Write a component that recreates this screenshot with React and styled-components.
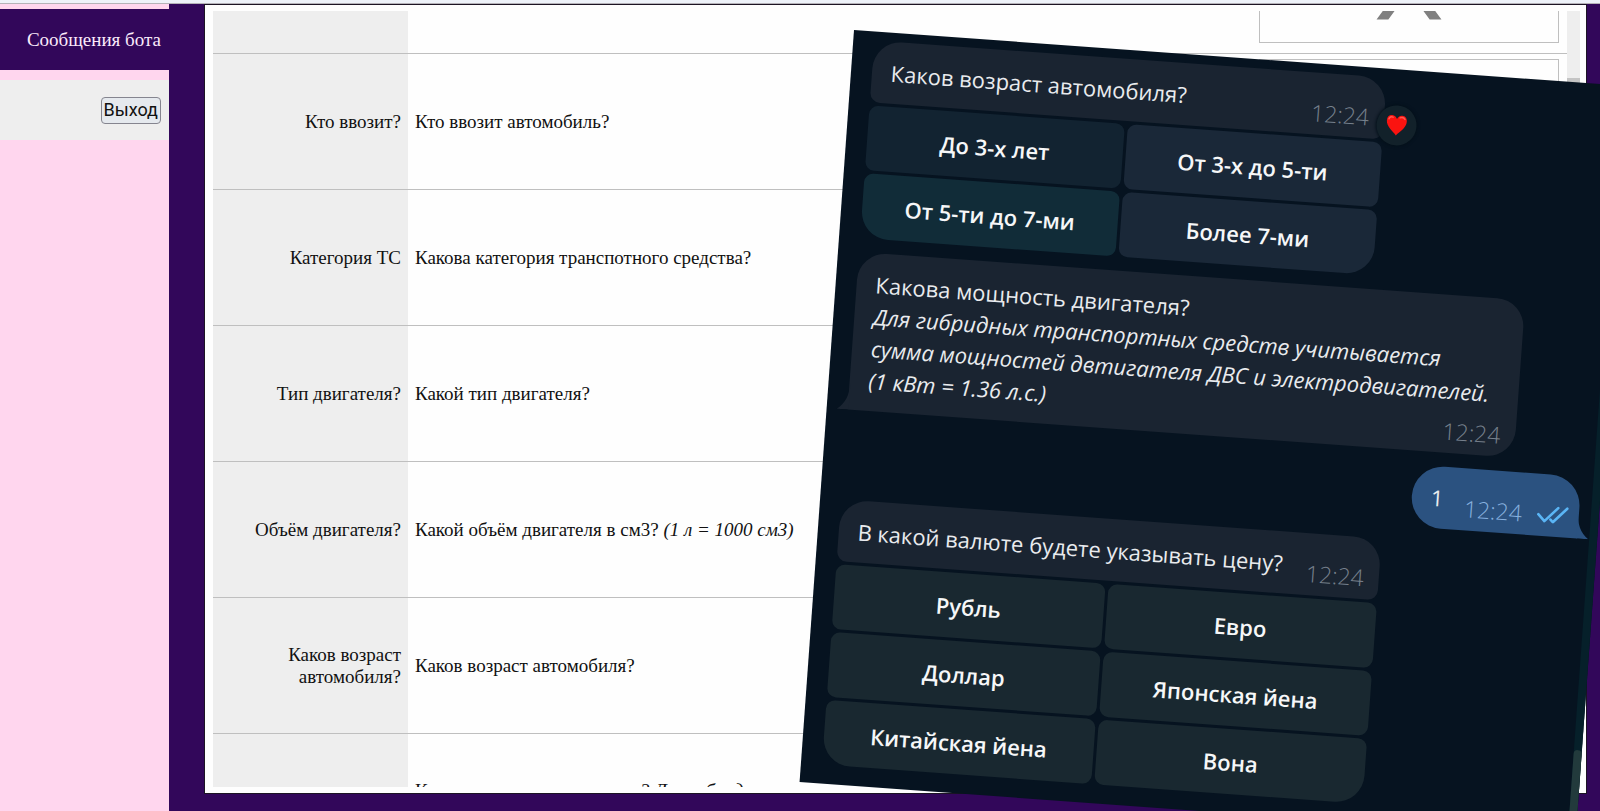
import React, { useLayoutEffect, useRef } from 'react'
import styled, { createGlobalStyle } from "styled-components";

const messages = [
  { id: 0, name: "", text: "" },
  { id: 1, name: "Кто ввозит?", text: "Кто ввозит автомобиль?" },
  { id: 2, name: "Категория ТС", text: "Какова категория транспотного средства?" },
  { id: 3, name: "Тип двигателя?", text: "Какой тип двигателя?" },
  { id: 4, name: "Объём двигателя?", text: "Какой объём двигателя в см3?", note: "(1 л = 1000 см3)" },
  { id: 5, name: "Каков возраст автомобиля?", text: "Каков возраст автомобиля?" },
  {
    id: 6,
    name: "",
    text: "Какова мощность двигателя?",
    note: "Для гибридных транспортных средств учитывается сумма мощностей двтигателя ДВС и электродвигателей. (1 кВт = 1.36 л.с.)"
  },
];

const ages = [
  { label: "До 3-х лет", color: "#122331" },
  { label: "От 3-х до 5-ти", color: "#1a2838" },
  { label: "От 5-ти до 7-ми", color: "#112c38" },
  { label: "Более 7-ми", color: "#1a2838" },
];

const currencies = ["Рубль", "Евро", "Доллар", "Японская йена", "Китайская йена", "Вона"];

function MessageTable() {
  const scroller = useRef(null);

  useLayoutEffect(() => {
    scroller.current.scrollTop = 93;
  }, [])

  return (
    <Scroller ref={scroller}>
      <Table>
        <tbody>
          {messages.map((message) => (
            <tr key={message.id}>
              <NameCell scope="row">{message.name}</NameCell>
              <TextCell>
                {message.text} {message.note && <i>{message.note}</i>}
              </TextCell>
              <ImageCell>
                <NoImage viewBox="0 0 300 120">
                  <path d="M117 97h12l54-73h-12z M183 97h-12l-54-73h12z" fill="#808080" />
                </NoImage>
              </ImageCell>
            </tr>
          ))}
        </tbody>
      </Table>
    </Scroller>
  )
}

function Chat() {
  return (
    <ChatWindow>
      <Feed>
        <Group $width="514px">
          <Bubble $keyboard>
            <Body>Каков возраст автомобиля?</Body>
            <Time>12:24</Time>
            <Reaction>
              <svg width="22" height="22" viewBox="0 0 22 22">
                <path d="M11 21C8 17 1 13 1 6.500C1 3 3 1 6 1C8.500 1 10 2.500 11 4.500C12 2.500 13.500 1 16 1C19 1 21 3 21 6.500C21 13 14 17 11 21Z" fill="#fb1310" />
                <path d="M3 5C3.500 3 5 2.300 7 3M14 3.200C16 2.300 18 2.800 19 4.500" stroke="#ff5a50" strokeWidth="1.500" fill="none" strokeLinecap="round" />
              </svg>
            </Reaction>
          </Bubble>
          <Keyboard>
            {ages.map((age) => (
              <KeyButton key={age.label} type="button" $color={age.color}>{age.label}</KeyButton>
            ))}
          </Keyboard>
        </Group>
        <Group $width="668px">
          <Bubble $tail="left">
            <Body>
              Какова мощность двигателя?<br />
              <i>
                Для гибридных транспортных средств учитывается<br />
                сумма мощностей двтигателя ДВС и электродвигателей.<br />
                (1 кВт = 1.36 л.с.)
              </i>
            </Body>
            <Time>12:24</Time>
            <Tail $side="left" viewBox="0 0 12 28">
              <path d="M12 0C12 14 8 22 0 28H12Z" fill="#1a2431" />
            </Tail>
          </Bubble>
        </Group>
        <Group $width="168px" $own>
          <Bubble $tail="right" $own>
            <Body>1</Body>
            <Time $own>
              12:24
              <svg width="32" height="18" viewBox="0 0 32 18">
                <path d="M1.500 9.500L8 16L21 2M14 14L16.500 16.500L30 2" stroke="#5ab5f5" strokeWidth="2.600" fill="none" strokeLinecap="round" strokeLinejoin="round" />
              </svg>
            </Time>
            <Tail $side="right" viewBox="0 0 12 28">
              <path d="M0 0C0 14 4 22 12 28H0Z" fill="#2b5280" />
            </Tail>
          </Bubble>
        </Group>
        <Group $width="542px">
          <Bubble $keyboard>
            <Body>В какой валюте будете указывать цену?</Body>
            <Time>12:24</Time>
          </Bubble>
          <Keyboard>
            {currencies.map((currency) => (
              <KeyButton key={currency} type="button">{currency}</KeyButton>
            ))}
          </Keyboard>
        </Group>
      </Feed>
      <ChatTrack>
        <ChatThumb />
      </ChatTrack>
    </ChatWindow>
  )
}

function App() {
  return (
    <Page>
      <GlobalStyle />
      <TopStrip />
      <Layout>
        <Sidebar>
          <NavLink href="#messages">Сообщения бота</NavLink>
          <Exit>
            <ExitButton type="button">Выход</ExitButton>
          </Exit>
        </Sidebar>
        <Main>
          <Panel>
            <MessageTable />
            <Track>
              <Thumb />
            </Track>
          </Panel>
        </Main>
      </Layout>
      <Chat />
    </Page>
  )
}

const GlobalStyle = createGlobalStyle`
* {
  box-sizing: border-box;
}
body {
  margin: 0;
  font-family: "Liberation Serif", serif;
  font-size: 19px;
  line-height: 22px;
  color: #111;
}
`
const Page = styled.div`
  position: relative;
  display: flex;
  flex-direction: column;
  height: 100vh;
  overflow: hidden;
`
const TopStrip = styled.div`
  height: 4px;
  background: #eef2f9;
  border-bottom: 1px solid #b5b2b8;
`
const Layout = styled.div`
  flex: 1;
  display: flex;
  min-height: 0;
`
const Sidebar = styled.nav`
  width: 169px;
  padding-top: 5px;
  background: #ffd6ee;
  display: flex;
  flex-direction: column;
  gap: 10px;
`
const NavLink = styled.a`
  height: 61px;
  padding: 0 8px;
  display: flex;
  align-items: center;
  justify-content: flex-end;
  background: #32075a;
  color: #fbeafa;
  text-decoration: none;
`
const Exit = styled.div`
  height: 60px;
  padding: 0 8px;
  display: flex;
  align-items: center;
  justify-content: flex-end;
  background: #eee;
`
const ExitButton = styled.button`
  height: 27px;
  padding: 0 2px;
  font-family: Roboto, sans-serif;
  font-size: 18px;
  line-height: 22px;
  color: #111;
  background: #e5e9ee;
  border: 1px solid #85858f;
  border-radius: 4px;
`
const Main = styled.main`
  flex: 1;
  min-width: 0;
  display: flex;
  padding: 0 13px 17px 35px;
  background: #32075a;
`
const Panel = styled.section`
  flex: 1;
  min-width: 0;
  display: flex;
  padding: 6px 6px 6px 8px;
  background: #fefefe;
  border: 1px solid #1c1424;
`
const Scroller = styled.div`
  flex: 1;
  min-width: 0;
  overflow: hidden;
`
const Table = styled.table`
  width: 100%;
  table-layout: fixed;
  border-collapse: separate;
  border-spacing: 0;

  tr {
    height: 136px;
  }
  th, td {
    border-bottom: 1px solid #bfbfbf;
  }
`
const NameCell = styled.th`
  width: 195px;
  padding: 0 7px;
  text-align: right;
  font-weight: normal;
  background: #eee;
`
const TextCell = styled.td`
  padding: 0 7px;
`
const ImageCell = styled.td`
  width: 316px;
  padding: 5px 8px 10px;
`
const NoImage = styled.svg`
  display: block;
  width: 300px;
  height: 120px;
  margin: 0 auto;
  border: 1px solid #bfbfbf;
`
const Track = styled.div`
  width: 13px;
  padding-top: 67px;
  background: #eee;
`
const Thumb = styled.div`
  height: 480px;
  background: #c4c4c4;
`
const ChatWindow = styled.aside`
  position: absolute;
  top: 30px;
  right: -32px;
  width: 778px;
  height: 754px;
  display: flex;
  background: #061320;
  color: #e9ebee;
  font-family: "Open Sans", "Noto Sans", sans-serif;
  font-size: 22px;
  line-height: 32px;
  transform: rotate(4.14deg);
  transform-origin: 0 0;
`
const Feed = styled.div`
  flex: 1;
  display: flex;
  flex-direction: column;
  gap: 14px;
  padding: 9px 12px 20px 21px;
`
const Group = styled.div`
  width: ${(props) => props.$width};
  display: flex;
  flex-direction: column;
  gap: 3px;
  align-self: ${(props) => props.$own ? "flex-end" : "flex-start"};
`
const Bubble = styled.div`
  position: relative;
  display: grid;
  padding: 15px ${(props) => props.$own ? "10px" : "15px"} 6px 19px;
  background: ${(props) => props.$own ? "#2b5280" : "#1a2431"};
  border-radius: 28px;
  ${(props) => props.$own && "border-radius: 31px;"}
  ${(props) => props.$keyboard && "border-radius: 28px 28px 10px 10px;"}
  ${(props) => props.$tail === "left" && "border-bottom-left-radius: 0;"}
  ${(props) => props.$tail === "right" && "border-bottom-right-radius: 0;"}
`
const Body = styled.div`
  grid-area: 1 / 1;
  padding-bottom: 9px;
  white-space: nowrap;
`
const Time = styled.div`
  grid-area: 1 / 1;
  align-self: end;
  justify-self: end;
  display: flex;
  align-items: center;
  gap: 15px;
  font-size: 23px;
  font-weight: 300;
  color: ${(props) => props.$own ? "#86b0de" : "#76808c"};
`
const Tail = styled.svg`
  position: absolute;
  bottom: 0;
  ${(props) => props.$side}: -11px;
  width: 12px;
  height: 28px;
`
const Reaction = styled.div`
  position: absolute;
  top: 27px;
  right: -33px;
  width: 40px;
  height: 40px;
  display: flex;
  align-items: center;
  justify-content: center;
  background: #12212a;
  border-radius: 50%;
  box-shadow: 0 0 3px 1px #04101a;
`
const Keyboard = styled.div`
  display: grid;
  grid-template-columns: 1fr 1fr;
  gap: 3px;

  button:nth-last-child(2) {
    border-bottom-left-radius: 28px;
  }
  button:last-child {
    border-bottom-right-radius: 28px;
  }
`
const KeyButton = styled.button`
  height: 65px;
  padding: 0;
  border: none;
  border-radius: 9px;
  background: ${(props) => props.$color || "#192830"};
  color: #f6f7f8;
  font: inherit;
  font-weight: 600;
  cursor: pointer;
`
const ChatTrack = styled.div`
  width: 8px;
  display: flex;
  flex-direction: column;
  justify-content: flex-end;
  background: #06202a;
`
const ChatThumb = styled.div`
  height: 88px;
  border-radius: 4px 4px 0 0;
  background: #223a3c;
`

export default App
